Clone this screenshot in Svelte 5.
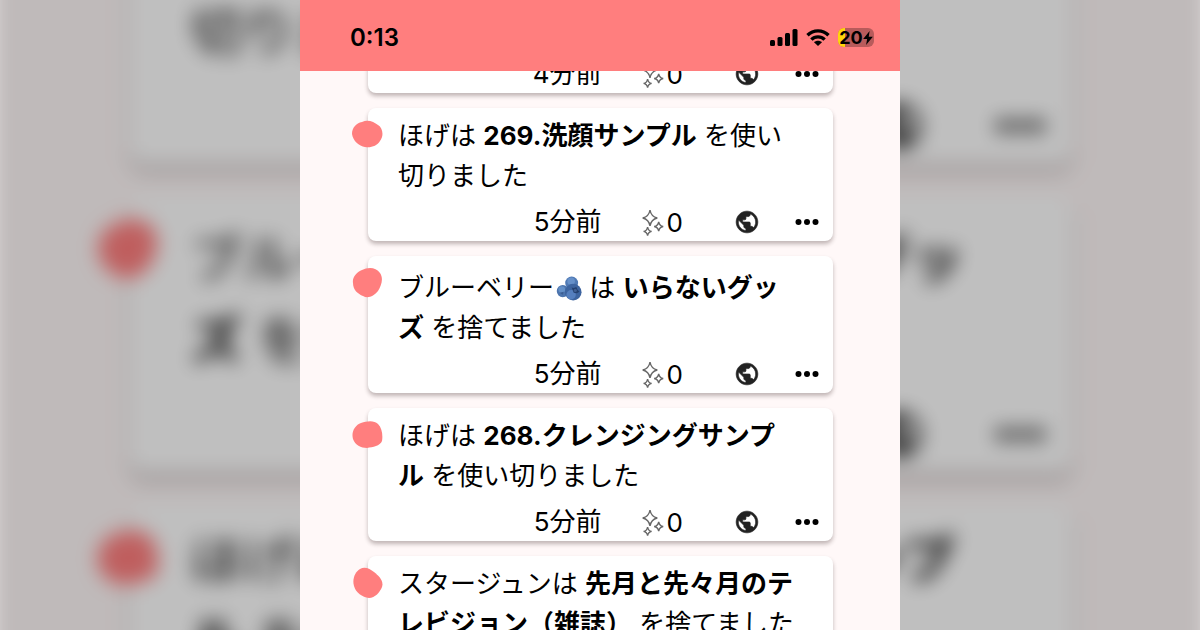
<script>
  let clock = $state('0:13');
  let battery = $state(20);

  let posts = $state([
    { id: 1, ago: '4分前', likes: 0 },
    { id: 2, user: 'ほげ', item: '269.洗顔サンプル', action: 'を使い切りました', ago: '5分前', likes: 0 },
    { id: 3, user: 'ブルーベリー', berry: true, item: 'いらないグッズ', action: 'を捨てました', ago: '5分前', likes: 0 },
    { id: 4, user: 'ほげ', item: '268.クレンジングサンプル', action: 'を使い切りました', ago: '5分前', likes: 0 },
    { id: 5, user: 'スタージュン', item: '先月と先々月のテレビジョン（雑誌）', action: 'を捨てました', ago: '5分前', likes: 0 },
  ]);

  const blobs = [
    'M10 3C16 0 22 3 26 6C31 9 32 17 28 22C25 27 19 29 13 28C7 27 1 22 0 15C0 9 4 4 10 3Z',
    'M10 3C16 0 24 0 28 6C32 12 29 19 26 24C22 29 16 32 11 29C6 27 1 23 1 16C0 10 5 5 10 3Z',
    'M9 4C15 2 22 1 26 5C30 9 31 16 30 22C28 27 21 28 15 29C9 29 3 26 1 20C-1 13 3 6 9 4Z',
    'M8 2C13-1 18 2 22 5C27 9 32 14 30 20C28 25 23 31 17 31C10 30 4 26 2 19C0 12 3 5 8 2Z',
  ];

  function like(post) {
    post.likes += 1;
  }

  function scrollTo(node, top) {
    node.scrollTop = top;
  }
</script>

{#snippet screen()}
  <div class="screen">
    <header class="status">
      <span class="clock">{clock}</span>
      <div class="status-icons">
        <svg width="28" height="17" viewBox="0 0 28 17" aria-hidden="true">
          <rect x="0" y="11" width="5" height="6" rx="1.5" />
          <rect x="7.5" y="8" width="5" height="9" rx="1.5" />
          <rect x="15" y="4" width="5" height="13" rx="1.5" />
          <rect x="22.5" y="0" width="5" height="17" rx="1.5" />
        </svg>
        <svg width="24" height="17" viewBox="0 0 24 17" aria-hidden="true">
          <path d="M1.500 6.200C7.300 0.400 16.700 0.400 22.500 6.200M5.400 10.600C9 7 15 7 18.600 10.600" fill="none" stroke="#000" stroke-width="3.400" />
          <path d="M12 17L8 13.200C10.200 11.200 13.800 11.200 16 13.200Z" />
        </svg>
        <div class="battery">
          <span class="level" style="width: {battery}%"></span>
          <span class="percent">{battery}</span>
          <svg width="10" height="14" viewBox="0 0 9 13" aria-hidden="true"><path d="M6 0L0 7.400H3.700L2.700 13L9 5.300H5.200Z" /></svg>
        </div>
      </div>
    </header>

    <div class="feed" use:scrollTo={46}>
      {#each posts as post, i (post.id)}
        <article class="post">
          {#if post.user}
            <svg class="blob" width="31" height="31" viewBox="0 0 31 31" aria-hidden="true"><path d={blobs[(i - 1) % blobs.length]} /></svg>
            <p class="text">
              {post.user}{#if post.berry}<svg class="berry" width="28" height="25" viewBox="-1 0 26 24" role="img" aria-label="ブルーベリー">
                <circle cx="7" cy="14.5" r="5.8" fill="#4c74ad" />
                <circle cx="6" cy="13" r="3.2" fill="#638fc7" />
                <path d="M4 16L8 15L7 18Z" fill="#3a5d92" />
                <circle cx="15.5" cy="6.7" r="6.2" fill="#4f79b4" />
                <circle cx="15" cy="5" r="3.6" fill="#6690c9" />
                <circle cx="17" cy="15.5" r="8" fill="#3d649f" />
                <circle cx="15" cy="18" r="4.5" fill="#557fbe" />
                <path d="M15.5 11L17.500 11.5L20 10.500L21 13L23 15L20.500 16.500L17.500 16L16.500 13.500Z" fill="#24406f" />
                <circle cx="19" cy="13.8" r="1.5" fill="#3f5e92" />
              </svg>{' '}{/if}は <b>{post.item}</b> {post.action}
            </p>
          {/if}
          <footer class="meta">
            <time>{post.ago}</time>
            <button class="like" aria-label="いいね {post.likes}" onclick={() => like(post)}>
              <svg width="22" height="27" viewBox="0 0 22 27" aria-hidden="true">
                <path d="M8 1C8.8 5.8 10.8 8 15.3 9C10.8 10 8.8 12.2 8 17C7.2 12.2 5.2 10 .7 9C5.2 8 7.2 5.8 8 1Z" />
                <path d="M16.7 12.8C17.2 15.8 18.4 17 21.2 17.5C18.4 18 17.2 19.2 16.7 22.2C16.2 19.2 15 18 12.2 17.5C15 17 16.2 15.8 16.7 12.8Z" />
                <path d="M5.6 18C6.1 21 7.1 22 9.6 22.4C7.1 22.8 6.1 23.8 5.6 26.6C5.1 23.8 4.1 22.8 1.6 22.4C4.1 22 5.1 21 5.6 18Z" />
              </svg>
              {post.likes}
            </button>
            <button aria-label="公開">
              <svg class="globe" width="26" height="26" viewBox="0 0 24 24" aria-hidden="true">
                <path d="M12 2C6.48 2 2 6.48 2 12s4.48 10 10 10 10-4.48 10-10S17.52 2 12 2zm-1 17.93c-3.95-.49-7-3.85-7-7.93 0-.62.08-1.21.21-1.79L9 15v1c0 1.1.9 2 2 2v1.93zm6.9-2.54c-.26-.81-1-1.39-1.9-1.39h-1v-3c0-.55-.45-1-1-1H8v-2h2c.55 0 1-.45 1-1V7h2c1.1 0 2-.9 2-2v-.41c2.93 1.19 5 4.06 5 7.41 0 2.08-.8 3.97-2.1 5.39z" />
              </svg>
            </button>
            <button aria-label="メニュー">
              <svg width="24" height="8" viewBox="0 0 24 8" aria-hidden="true">
                <circle cx="3.5" cy="4" r="3" />
                <circle cx="12" cy="4" r="3" />
                <circle cx="20.5" cy="4" r="3" />
              </svg>
            </button>
          </footer>
        </article>
      {/each}
    </div>
  </div>
{/snippet}

<div class="page">
  <div class="backdrop" aria-hidden="true" inert>
    {@render screen()}
  </div>
  <main>
    {@render screen()}
  </main>
</div>

<style>
  :global(body) { margin: 0; background: #fff; }

  .page { position: relative; display: flex; justify-content: center; height: 100vh; overflow: hidden; }
  main { position: relative; width: 50%; height: 100%; }
  .backdrop { position: absolute; inset: 0 25%; transform: scale(2.03); filter: blur(5px) brightness(0.75); }

  .screen { display: flex; flex-direction: column; height: 100%; overflow: hidden; background: #fff8f8; color: #000; font-family: Inter, 'Noto Sans CJK JP', sans-serif; font-size: 26px; }

  .status { flex: none; display: flex; align-items: center; justify-content: space-between; height: 67px; padding: 4px 26px 0 50px; background: #ff7e7e; }
  .clock { font-size: 24px; font-weight: 600; }
  .status-icons { display: flex; align-items: center; gap: 8px; }
  .battery { position: relative; display: flex; align-items: center; justify-content: center; width: 36px; height: 19px; overflow: hidden; border-radius: 6px; background: #b85b5b; }
  .level { position: absolute; inset: 0 auto 0 0; background: #ffd60a; }
  .percent { position: relative; font-size: 18px; font-weight: 700; line-height: 19px; }
  .battery svg { position: relative; }

  .feed { flex: 1; min-height: 0; display: flex; flex-direction: column; gap: 15px; padding: 15px 67px 15px 68px; overflow-y: auto; scrollbar-width: none; }
  .post { position: relative; flex: none; padding-top: 8px; border-radius: 8px; background: #fff; box-shadow: 0 3px 4px rgba(60, 40, 40, 0.32); }
  .blob { position: absolute; top: 11px; left: -16px; fill: #ff7e7e; }
  .text { margin: 0; padding: 0 36px 0 30px; line-height: 40px; }
  .text b { font-weight: 700; }
  .berry { margin-top: 12px; vertical-align: -4px; }

  .meta { display: flex; align-items: center; justify-content: flex-end; gap: 35px; height: 38px; padding: 7px 14px 0 0; }
  time { line-height: 38px; }
  button { display: flex; align-items: center; padding: 0; border: none; background: none; color: inherit; font: inherit; cursor: pointer; }
  .like { gap: 3px; padding: 0 16px 0 5px; }
  .like svg { fill: none; stroke: #666; stroke-width: 1.4; }
  .globe { fill: #222; stroke: #222; stroke-width: 0.6; }
</style>
